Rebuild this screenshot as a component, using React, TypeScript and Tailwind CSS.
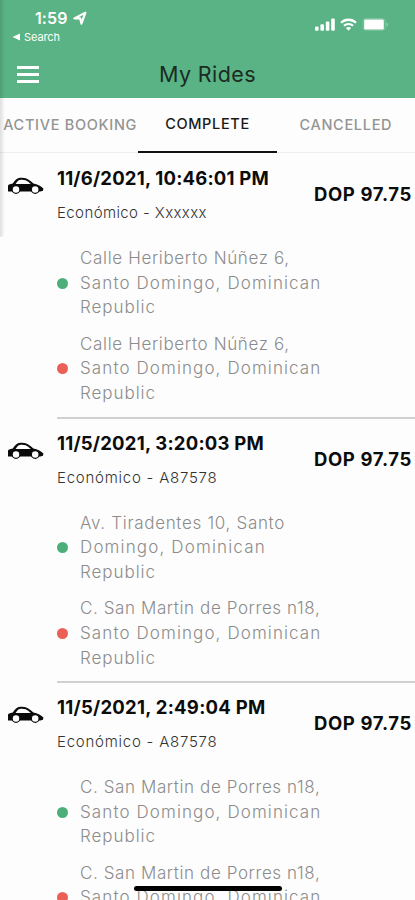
import React from "react";
import clsx from "clsx";

interface Line {
  text: string;
  tracking: string;
}

interface Ride {
  id: number;
  date: Line;
  vehicle: Line;
  price: string;
  pickup: Line[];
  dropoff: Line[];
}

const CALLE: Line[] = [
  { text: "Calle Heriberto Núñez 6,", tracking: "tracking-[0.65px]" },
  { text: "Santo Domingo, Dominican", tracking: "tracking-[1.1px]" },
  { text: "Republic", tracking: "tracking-[0.95px]" },
];

const SAN_MARTIN: Line[] = [
  { text: "C. San Martin de Porres n18,", tracking: "tracking-[0.6px]" },
  { text: "Santo Domingo, Dominican", tracking: "tracking-[1.1px]" },
  { text: "Republic", tracking: "tracking-[0.95px]" },
];

const TIRADENTES: Line[] = [
  { text: "Av. Tiradentes 10, Santo", tracking: "tracking-[0.68px]" },
  { text: "Domingo, Dominican", tracking: "tracking-[1.15px]" },
  { text: "Republic", tracking: "tracking-[0.95px]" },
];

const rides: Ride[] = [
  {
    id: 1,
    date: { text: "11/6/2021, 10:46:01 PM", tracking: "tracking-[0.2px]" },
    vehicle: { text: "Económico - Xxxxxx", tracking: "tracking-[0.4px]" },
    price: "DOP 97.75",
    pickup: CALLE,
    dropoff: CALLE,
  },
  {
    id: 2,
    date: { text: "11/5/2021, 3:20:03 PM", tracking: "tracking-[0.22px]" },
    vehicle: { text: "Económico - A87578", tracking: "tracking-[0.76px]" },
    price: "DOP 97.75",
    pickup: TIRADENTES,
    dropoff: SAN_MARTIN,
  },
  {
    id: 3,
    date: { text: "11/5/2021, 2:49:04 PM", tracking: "tracking-[0.26px]" },
    vehicle: { text: "Económico - A87578", tracking: "tracking-[0.76px]" },
    price: "DOP 97.75",
    pickup: SAN_MARTIN,
    dropoff: SAN_MARTIN,
  },
];

function CarIcon() {
  return (
    <svg viewBox="0 0 38 18" className="w-[38px] h-[18px]">
      <path
        d="M1 14.6V9C1 7.4 2.6 7 5.8 6.4C7.8 4 9.2 1.8 11.8 1.1C14.2 0.6 17.4 0.7 19.4 1.4C22 2.4 24.2 4.4 26.4 6.4C30.2 7.2 33.8 8.8 36.4 11.4L36 13.8L33.4 14.6Z"
        fill="#0b0b0b"
      />
      <path d="M8.6 7C9.8 5 10.8 3.4 12.6 2.9C14.6 2.5 16.8 2.6 18.6 3.2C20.4 3.9 22.2 5.5 23.8 7Z" fill="#fff" />
      <circle cx="9" cy="12.4" r="3.9" fill="#fff" stroke="#0b0b0b" strokeWidth="1.3" />
      <circle cx="28.2" cy="12.4" r="3.9" fill="#fff" stroke="#0b0b0b" strokeWidth="1.3" />
    </svg>
  );
}

function StatusBar() {
  return (
    <div className="flex justify-between pl-[12px] pr-[26px] pt-2 text-white">
      <div>
        <div className="flex items-center gap-[5px] pl-[23px] h-5">
          <span className="text-[16px] leading-5 font-semibold tracking-[0.1px]">1:59</span>
          <svg viewBox="0 0 14 14" className="w-[14px] h-[14px]" fill="none">
            <path d="M1.4 7.4 12.4 1.6 8.4 12.6 7.2 7.4Z" stroke="#fff" strokeWidth="2.2" strokeLinejoin="round" />
          </svg>
        </div>
        <div className="flex items-center gap-[4px] h-[17px]">
          <svg viewBox="0 0 8 8" className="w-2 h-2">
            <path d="M8 0.5V7.5L0.5 4Z" fill="#fff" />
          </svg>
          <span className="text-[11px] leading-4 tracking-[-0.1px]">Search</span>
        </div>
      </div>
      <div className="flex items-center gap-[5px] h-8">
        <svg viewBox="0 0 20 13" className="w-5 h-[13px]" fill="#fff">
          <rect x="0" y="8.6" width="3.6" height="4.2" rx="1.1" />
          <rect x="5.4" y="6.2" width="3.6" height="6.6" rx="1.1" />
          <rect x="10.8" y="3.4" width="3.6" height="9.4" rx="1.1" />
          <rect x="16.2" y="0.4" width="3.6" height="12.4" rx="1.1" />
        </svg>
        <svg viewBox="0 0 17 13" className="w-[17px] h-[13px]" fill="none" stroke="#fff">
          <path d="M1 4.8C5.2 0.7 11.8 0.7 16 4.8" strokeWidth="2.3" />
          <path d="M3.9 7.8C6.5 5.3 10.5 5.3 13.1 7.8" strokeWidth="2.1" />
          <path d="M8.5 12.8 5.9 10C7.3 8.6 9.7 8.6 11.1 10Z" fill="#fff" stroke="none" />
        </svg>
        <svg viewBox="0 0 27 13" className="w-[27px] h-[13px]">
          <rect x="1.1" y="0.6" width="22.2" height="11.6" rx="3" fill="none" stroke="#fff" strokeOpacity="0.25" />
          <rect x="2.2" y="1.6" width="19.6" height="9.8" rx="1.2" fill="#fff" />
          <path d="M24.6 4.2C26.4 5 26.4 8 24.6 8.8Z" fill="#fff" fillOpacity="0.4" />
        </svg>
      </div>
    </div>
  );
}

function Header() {
  return (
    <header className="h-[97.5px] bg-[#59b384]">
      <StatusBar />
      <div className="grid grid-cols-[1fr_auto_1fr] items-center h-[52px] mt-[3px]">
        <button className="flex flex-col gap-[4px] pl-[17px]" aria-label="Menu">
          <span className="w-[22px] h-[3px] bg-white" />
          <span className="w-[22px] h-[3px] bg-white" />
          <span className="w-[22px] h-[3px] bg-white" />
        </button>
        <h1 className="text-[21.5px] leading-7 text-[#1b2b23] tracking-[0.4px]">My Rides</h1>
      </div>
    </header>
  );
}

function Tabs() {
  return (
    <nav className="grid grid-cols-3 h-[55.5px] text-[14.5px] font-medium text-[#949494] border-b border-[#ededed]">
      <button className="h-[55.5px] pl-[2px] whitespace-nowrap tracking-[0.7px]">ACTIVE BOOKING</button>
      <button className="h-[55.5px] border-b-2 border-[#111] text-[#1a1a1a] tracking-[0.65px]">COMPLETE</button>
      <button className="h-[55.5px] tracking-[0.7px]">CANCELLED</button>
    </nav>
  );
}

function Address({ lines, dot }: { lines: Line[]; dot: string }) {
  return (
    <div className="flex items-center gap-3">
      <span className={clsx("w-[11px] h-[11px] rounded-full shrink-0", dot)} />
      <p className="text-[17px] leading-[24.7px] font-light text-[#8c8c8c]">
        {lines.map((line) => (
          <span key={line.text} className={clsx("block whitespace-nowrap", line.tracking)}>
            {line.text}
          </span>
        ))}
      </p>
    </div>
  );
}

function RideItem({ ride }: { ride: Ride }) {
  return (
    <article className="flex h-[264.5px]">
      <div className="w-[57px] pl-[7px] pt-[23px] shrink-0">
        <CarIcon />
      </div>
      <div className="flex-1 border-b-2 border-[#d0d0d0]">
        <div className="flex justify-between pr-[3px] whitespace-nowrap">
          <div className="pt-[10px]">
            <h2 className={clsx("text-[18.5px] leading-7 font-bold text-[#0c0c0c]", ride.date.tracking)}>
              {ride.date.text}
            </h2>
            <p className={clsx("mt-[11px] text-[15px] leading-5 font-light text-[#333]", ride.vehicle.tracking)}>
              {ride.vehicle.text}
            </p>
          </div>
          <span className="pt-[26px] text-[18.5px] leading-7 font-bold text-[#0c0c0c] tracking-[0.65px]">
            {ride.price}
          </span>
        </div>
        <div className="flex flex-col gap-[11.6px] pt-[23px]">
          <Address lines={ride.pickup} dot="bg-[#4caf7a]" />
          <Address lines={ride.dropoff} dot="bg-[#ec5f57]" />
        </div>
      </div>
    </article>
  );
}

export default function App() {
  return (
    <div className="relative w-[415px] h-[900px] overflow-hidden bg-[#fdfdfd] font-['Inter',sans-serif]">
      <Header />
      <Tabs />
      <main className="pt-px">
        {rides.map((ride) => (
          <RideItem key={ride.id} ride={ride} />
        ))}
      </main>
      {/* Drawer shadow */}
      <div className="absolute left-0 top-0 w-[5px] h-[237px] rounded-br-full bg-gradient-to-r from-black/12 to-transparent" />
      {/* Home indicator */}
      <div className="absolute left-[134px] top-[886px] w-[148px] h-[5px] rounded-full bg-black" />
    </div>
  );
}
